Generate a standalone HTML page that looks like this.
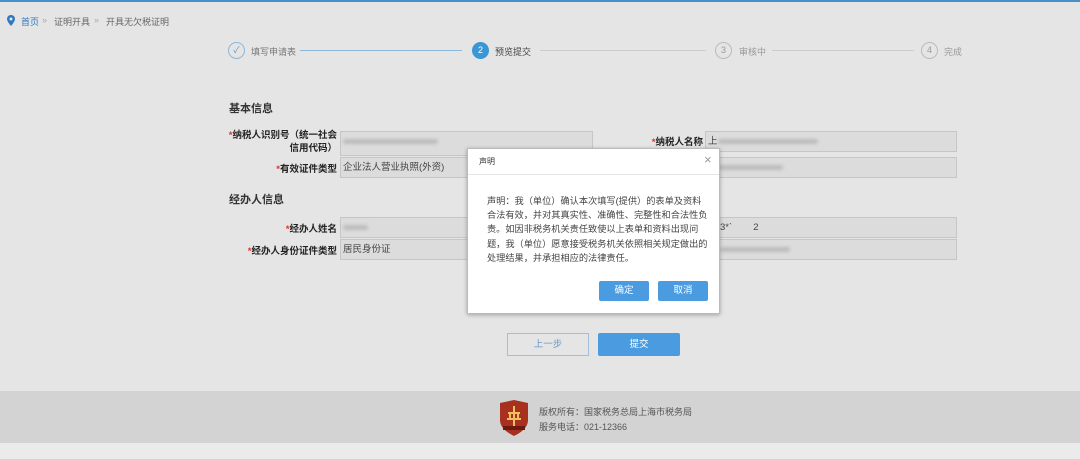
<!DOCTYPE html>
<html><head><meta charset="utf-8"><style>
*{margin:0;padding:0;box-sizing:border-box}
body{width:1080px;height:459px;overflow:hidden;background:#e5e5e5;font-family:"Liberation Sans","Noto Sans CJK SC",sans-serif;font-size:9px;color:#333;position:relative}
.a{position:absolute;white-space:nowrap}
.inp{position:absolute;background:#dcdcdc;border:1px solid #c6c6c6;height:21px;line-height:19px;padding-left:2px;font-size:9.5px;color:#444}
.blur{display:inline-block;height:5px;background:#bcbcbc;border-radius:3px;filter:blur(1.5px);vertical-align:middle}
.lbl{position:absolute;font-weight:bold;font-size:9.5px;text-align:right;color:#222}
.lbl i{color:#d33;font-style:normal}
.circ{position:absolute;width:17px;height:17px;border-radius:50%;border:1px solid #bbb;text-align:center;line-height:15px;font-size:9px;color:#999}
.btn{position:absolute;background:#4a9be0;color:#fff;text-align:center;font-size:9.5px;border-radius:2px}
</style></head><body>
<div class="a" style="left:0;top:0;width:1080px;height:2px;background:#4a8fc8"></div>
<svg class="a" style="left:7px;top:15px" width="8" height="11" viewBox="0 0 8 11"><path d="M4 0C1.8 0 0 1.7 0 3.9 0 6.7 4 11 4 11s4-4.3 4-7.1C8 1.7 6.2 0 4 0z" fill="#2f78c0"/><circle cx="4" cy="4" r="1.5" fill="#e5e5e5"/></svg>
<div class="a" style="left:21px;top:15px;color:#2f78c0">首页</div>
<div class="a" style="left:42px;top:15px;color:#aaa">»</div>
<div class="a" style="left:54px;top:15px;color:#666">证明开具</div>
<div class="a" style="left:94px;top:15px;color:#aaa">»</div>
<div class="a" style="left:106px;top:15px;color:#666">开具无欠税证明</div>

<div class="circ" style="left:228px;top:42px;border-color:#8ab8dd;color:#5a9bd0">✓</div>
<div class="a" style="left:251px;top:45px;color:#777">填写申请表</div>
<div class="a" style="left:300px;top:50px;width:162px;height:1px;background:#8ab8dd"></div>
<div class="circ" style="left:472px;top:42px;background:#3a97d6;border-color:#3a97d6;color:#fff">2</div>
<div class="a" style="left:495px;top:45px;color:#444">预览提交</div>
<div class="a" style="left:540px;top:50px;width:166px;height:1px;background:#ccc"></div>
<div class="circ" style="left:715px;top:42px">3</div>
<div class="a" style="left:739px;top:45px;color:#999">审核中</div>
<div class="a" style="left:772px;top:50px;width:142px;height:1px;background:#ccc"></div>
<div class="circ" style="left:921px;top:42px">4</div>
<div class="a" style="left:944px;top:45px;color:#999">完成</div>

<div class="a" style="left:229px;top:100px;font-size:11px;font-weight:bold">基本信息</div>
<div class="lbl" style="left:220px;top:129px;width:117px;line-height:13px"><i>*</i>纳税人识别号（统一社会<br>信用代码）</div>
<div class="inp" style="left:340px;top:131px;width:253px;height:25px"><span class="blur" style="width:95px"></span></div>
<div class="lbl" style="left:220px;top:161px;width:117px"><i>*</i>有效证件类型</div>
<div class="inp" style="left:340px;top:157px;width:253px">企业法人营业执照(外资)</div>
<div class="lbl" style="left:600px;top:134px;width:103px"><i>*</i>纳税人名称</div>
<div class="inp" style="left:705px;top:131px;width:252px">上<span class="blur" style="width:100px"></span></div>
<div class="inp" style="left:705px;top:157px;width:252px"><span class="blur" style="width:65px;margin-left:10px"></span></div>

<div class="a" style="left:229px;top:191px;font-size:11px;font-weight:bold">经办人信息</div>
<div class="lbl" style="left:220px;top:221px;width:117px"><i>*</i>经办人姓名</div>
<div class="inp" style="left:340px;top:217px;width:253px"><span class="blur" style="width:25px"></span></div>
<div class="lbl" style="left:220px;top:243px;width:117px"><i>*</i>经办人身份证件类型</div>
<div class="inp" style="left:340px;top:239px;width:253px">居民身份证</div>
<div class="inp" style="left:705px;top:217px;width:252px"><span style="margin-left:12px">3*`&nbsp;&nbsp;&nbsp;&nbsp;&nbsp;&nbsp;&nbsp;&nbsp;2</span></div>
<div class="inp" style="left:705px;top:239px;width:252px"><span class="blur" style="width:70px;margin-left:12px"></span></div>

<div class="a" style="left:467px;top:148px;width:253px;height:166px;background:#fff;border:1px solid #bbb;box-shadow:0 1px 4px rgba(0,0,0,.3)">
<div class="a" style="left:11px;top:7px;font-size:8px;color:#333">声明</div>
<div class="a" style="left:236px;top:3px;font-size:13px;color:#999">×</div>
<div class="a" style="left:0;top:25px;width:251px;height:1px;background:#e5e5e5"></div>
<div class="a" style="left:19px;top:45px;font-size:9.2px;line-height:14.2px;color:#444">声明：我（单位）确认本次填写(提供）的表单及资料<br>合法有效，并对其真实性、准确性、完整性和合法性负<br>责。如因非税务机关责任致使以上表单和资料出现问<br>题，我（单位）愿意接受税务机关依照相关规定做出的<br>处理结果，并承担相应的法律责任。</div>
<div class="btn" style="left:131px;top:132px;width:50px;height:20px;line-height:20px">确定</div>
<div class="btn" style="left:190px;top:132px;width:50px;height:20px;line-height:20px">取消</div>
</div>

<div class="a" style="left:507px;top:333px;width:82px;height:23px;border:1px solid #9fbfdc;text-align:center;line-height:21px;color:#6a9bc8;font-size:9.5px">上一步</div>
<div class="btn" style="left:598px;top:333px;width:82px;height:23px;line-height:23px">提交</div>

<div class="a" style="left:0;top:391px;width:1080px;height:52px;background:#d3d3d3"></div>
<div class="a" style="left:0;top:443px;width:1080px;height:16px;background:#ebebeb"></div>
<svg class="a" style="left:498px;top:400px" width="32" height="36" viewBox="0 0 32 36"><path d="M2 3 16 0 30 3V20C30 28 22 33 16 36 10 33 2 28 2 20Z" fill="#a8301e"/><path d="M16 6V28M10 13H22M9 19H23M12 13 12 19M20 13 20 19" stroke="#f0c060" stroke-width="2" fill="none"/><rect x="5" y="26" width="22" height="4" fill="#6a1a10"/></svg>
<div class="a" style="left:539px;top:405px;font-size:9px;color:#555">版权所有：国家税务总局上海市税务局</div>
<div class="a" style="left:539px;top:420px;font-size:9px;color:#555">服务电话：021-12366</div>
</body></html>
